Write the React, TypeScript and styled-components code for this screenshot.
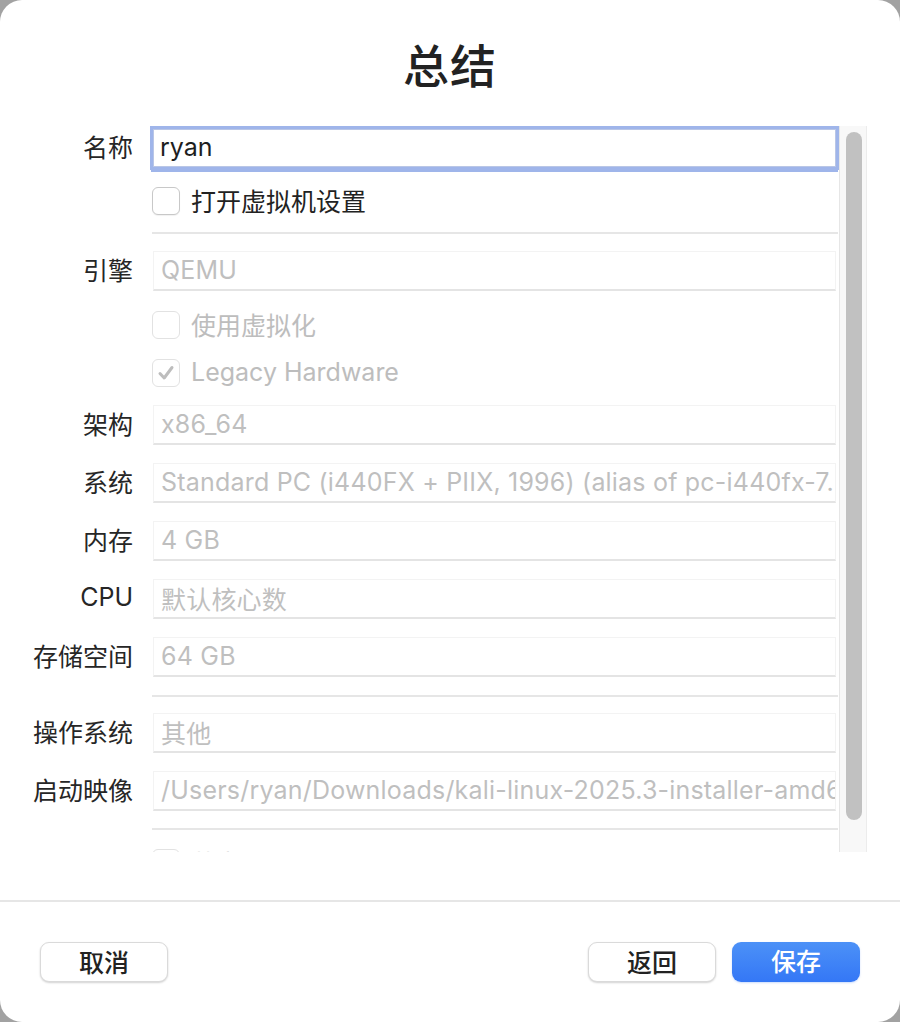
import React from 'react';
import styled, { createGlobalStyle } from 'styled-components';

const GlobalStyle = createGlobalStyle`
    html, body {
        margin: 0;
        padding: 0;
        background: #a2a2a2;
    }
    * {
        box-sizing: border-box;
    }
`

const FONT = `"Inter", "Noto Sans CJK SC", "Noto Sans", sans-serif`;

const Window = styled.div`
    width: 900px;
    height: 1022px;
    background: white;
    border-radius: 22px;
    overflow: hidden;
    display: flex;
    flex-direction: column;
    font-family: ${FONT};
`
const Header = styled.div`
    height: 126px;
    flex: none;
    display: flex;
    align-items: center;
    justify-content: center;
`
const Title = styled.h1`
    margin: 0;
    font-size: 46px;
    font-weight: 500;
    color: #222;
    letter-spacing: 1px;
`
const ScrollArea = styled.div`
    height: 726px;
    flex: none;
    display: flex;
`
const Content = styled.div`
    width: 839px;
    flex: none;
    overflow: hidden;
    padding-right: 3px;
    display: flex;
    flex-direction: column;
`
const Track = styled.div`
    width: 28px;
    flex: none;
    background: #f8f8f8;
    border-left: 1px solid #e6e6e6;
    border-right: 1px solid #ececec;
    padding: 6px 4px 0 6px;
`
const Thumb = styled.div`
    width: 16px;
    height: 688px;
    border-radius: 8px;
    background: #c1c1c1;
`
const Row = styled.div<{ $mt: number; $h?: number }>`
    margin-top: ${p => p.$mt}px;
    height: ${p => p.$h ?? 40}px;
    display: flex;
    align-items: center;
    gap: 20px;
    flex: none;
`
const Label = styled.div`
    width: 133px;
    flex: none;
    text-align: right;
    font-size: 25px;
    color: #262626;
    white-space: nowrap;
    padding-bottom: 5px;
`
const NameInput = styled.div`
    flex: 1;
    height: 100%;
    border: 1px solid #b9c6e6;
    box-shadow: 0 0 0 3px #9fb5ea, 0 3px 0 2px #9fb5ea;
    padding: 0 0 3px 6px;
    display: flex;
    align-items: center;
    font-size: 25px;
    color: #1e1e1e;
`
const Field = styled.div`
    flex: 1;
    min-width: 0;
    height: 100%;
    border: 1px solid #f3f3f3;
    border-bottom: 2px solid #e4e4e4;
    padding: 0 0 1px 7px;
    display: flex;
    align-items: center;
    font-size: 25px;
    letter-spacing: 0.2px;
    color: #bfbfbf;
    white-space: nowrap;
    overflow: hidden;
`
const CheckRow = styled.div<{ $mt: number }>`
    margin-top: ${p => p.$mt}px;
    height: 28px;
    flex: none;
    padding-left: 152px;
    display: flex;
    align-items: center;
    gap: 11px;
`
const Box = styled.div<{ $disabled?: boolean }>`
    width: 28px;
    height: 28px;
    flex: none;
    border-radius: 6px;
    border: 1px solid ${p => (p.$disabled ? '#e2e2e2' : '#c8c8c8')};
    background: white;
    box-shadow: ${p => (p.$disabled ? 'none' : '0 1px 1px rgba(0,0,0,0.06)')};
    display: flex;
    align-items: center;
    justify-content: center;
`
const CheckText = styled.span<{ $disabled?: boolean }>`
    font-size: 25px;
    color: ${p => (p.$disabled ? '#bdbdbd' : '#222')};
    white-space: nowrap;
    padding-bottom: 2px;
`
const Separator = styled.div<{ $mt: number }>`
    margin-top: ${p => p.$mt}px;
    margin-left: 152px;
    margin-right: -2px;
    height: 2px;
    flex: none;
    background: #e6e6e6;
`
const Spacer = styled.div`
    flex: 1;
`
const Footer = styled.div`
    height: 122px;
    flex: none;
    border-top: 2px solid #e6e6e6;
    display: flex;
    align-items: flex-start;
    padding: 40px 40px 0 40px;
    gap: 16px;
`
const Button = styled.button<{ $primary?: boolean }>`
    width: 128px;
    height: 40px;
    border-radius: 9px;
    font-family: ${FONT};
    font-size: 25px;
    font-weight: 500;
    padding: 0 0 7px 0;
    cursor: pointer;
    border: ${p => (p.$primary ? 'none' : '1px solid #dadada')};
    color: ${p => (p.$primary ? 'white' : '#222')};
    background: ${p => (p.$primary ? 'linear-gradient(#4c91f7, #3477f6)' : 'white')};
    box-shadow: ${p => (p.$primary ? '0 1px 2px rgba(52,120,246,0.25)' : '0 1px 2px rgba(0,0,0,0.18)')};
`
const Grow = styled.div`
    flex: 1;
`

const Check = () => (
    <svg width="20" height="20" viewBox="0 0 20 20">
        <path d="M4 10.5 L8.2 15 L16 4.5" fill="none" stroke="#bdbdbd" strokeWidth="3" strokeLinecap="round" strokeLinejoin="round" />
    </svg>
);

const fields: [string, string][] = [
    ['架构', 'x86_64'],
    ['系统', 'Standard PC (i440FX + PIIX, 1996) (alias of pc-i440fx-7.2)'],
    ['内存', '4 GB'],
    ['CPU', '默认核心数'],
    ['存储空间', '64 GB'],
];

export default function App() {
    return (
        <>
            <GlobalStyle />
            <Window>
                <Header>
                    <Title>总结</Title>
                </Header>
                <ScrollArea>
                    <Content>
                        <Row $mt={3} $h={38}>
                            <Label>名称</Label>
                            <NameInput>ryan</NameInput>
                        </Row>
                        <CheckRow $mt={20}>
                            <Box />
                            <CheckText>打开虚拟机设置</CheckText>
                        </CheckRow>
                        <Separator $mt={17} />
                        <Row $mt={17}>
                            <Label>引擎</Label>
                            <Field>QEMU</Field>
                        </Row>
                        <CheckRow $mt={20}>
                            <Box $disabled />
                            <CheckText $disabled>使用虚拟化</CheckText>
                        </CheckRow>
                        <CheckRow $mt={20}>
                            <Box $disabled><Check /></Box>
                            <CheckText $disabled>Legacy Hardware</CheckText>
                        </CheckRow>
                        {fields.map(([label, value]) => (
                            <Row key={label} $mt={18}>
                                <Label>{label}</Label>
                                <Field>{value}</Field>
                            </Row>
                        ))}
                        <Separator $mt={18} />
                        <Row $mt={16}>
                            <Label>操作系统</Label>
                            <Field>其他</Field>
                        </Row>
                        <Row $mt={18}>
                            <Label>启动映像</Label>
                            <Field>/Users/ryan/Downloads/kali-linux-2025.3-installer-amd64.iso</Field>
                        </Row>
                        <Separator $mt={17} />
                        <CheckRow $mt={19}>
                            <Box $disabled />
                            <CheckText $disabled>共享目录</CheckText>
                        </CheckRow>
                    </Content>
                    <Track>
                        <Thumb />
                    </Track>
                </ScrollArea>
                <Spacer />
                <Footer>
                    <Button>取消</Button>
                    <Grow />
                    <Button>返回</Button>
                    <Button $primary>保存</Button>
                </Footer>
            </Window>
        </>
    );
}
